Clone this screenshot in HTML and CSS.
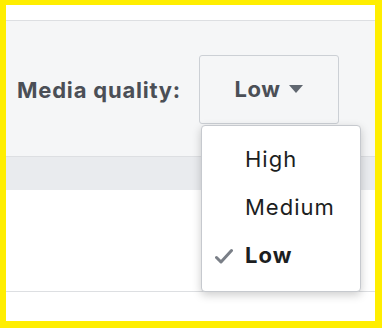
FILE: index.html
```html
<!DOCTYPE html>
<html lang="en">
<head>
  <meta charset="UTF-8" />
  <title>Media quality</title>
  <link rel="stylesheet" href="styles.css">
</head>
<body>
  <div class="frame">
    <div class="top-strip"></div>
    <div class="settings-row">
      <span class="label">Media quality:</span>
      <div class="picker">
        <button class="picker-btn">Low <span class="caret"></span></button>
        <ul class="menu">
          <li>High</li>
          <li>Medium</li>
          <li class="selected">
            <svg class="check" viewBox="0 0 18 16" width="18" height="16">
              <path d="M1.5 9.5 L6 14 L16.5 2.5" fill="none" stroke="#7a7f87" stroke-width="3" stroke-linecap="round" stroke-linejoin="round"/>
            </svg>
            Low
          </li>
        </ul>
      </div>
    </div>
    <div class="band"></div>
    <div class="content"></div>
    <div class="footer"></div>
  </div>
</body>
</html>
```

FILE: styles.css
```css
body {
  margin: 0;
  font-family: 'Inter', 'Liberation Sans', sans-serif;
  background: #ffee00;
}

.frame {
  width: 369px;
  height: 316px;
  border-style: solid;
  border-color: #ffee00;
  border-width: 5px 7px 7px 6px;
  background: #ffffff;
  display: flex;
  flex-direction: column;
  overflow: hidden;
}

.top-strip {
  height: 15px;
  background: #ffffff;
  border-bottom: 1px solid #dddfe2;
  flex-shrink: 0;
}

.settings-row {
  height: 136px;
  background: #f5f6f7;
  border-bottom: 1px solid #dddfe2;
  display: flex;
  align-items: flex-start;
  padding: 34px 0 0 11px;
  box-sizing: border-box;
  flex-shrink: 0;
}

.label {
  height: 69px;
  display: flex;
  align-items: center;
  font-size: 22px;
  font-weight: 700;
  letter-spacing: 0.8px;
  color: #4b4f56;
  width: 182px;
}

.picker {
  position: relative;
}

.picker-btn {
  width: 140px;
  height: 69px;
  border: 1px solid #ccd0d5;
  border-radius: 3px;
  background: #f5f6f7;
  font-family: inherit;
  font-size: 22px;
  font-weight: 700;
  letter-spacing: 0.5px;
  color: #4b4f56;
  display: flex;
  align-items: center;
  justify-content: center;
  gap: 9px;
  padding: 0 0 2px 0;
}

.caret {
  width: 0;
  height: 0;
  border-left: 7px solid transparent;
  border-right: 7px solid transparent;
  border-top: 8px solid #606770;
}

.menu {
  position: absolute;
  top: 70px;
  left: 2px;
  width: 160px;
  margin: 0;
  padding: 9px 0 12px 0;
  list-style: none;
  background: #ffffff;
  border: 1px solid #c6c9ce;
  border-radius: 4px;
  box-shadow: 0 3px 10px rgba(0, 0, 0, 0.2);
  box-sizing: border-box;
}

.menu li {
  position: relative;
  height: 48px;
  line-height: 48px;
  padding-left: 43px;
  font-size: 22px;
  letter-spacing: 1px;
  color: #1c1e21;
}

.menu li.selected {
  font-weight: 700;
}

.check {
  position: absolute;
  left: 13px;
  top: 17px;
}

.band {
  height: 33px;
  background: #e9ebee;
  flex-shrink: 0;
}

.content {
  height: 101px;
  background: #ffffff;
  border-bottom: 1px solid #dddfe2;
  flex-shrink: 0;
}

.footer {
  flex: 1;
  background: #ffffff;
}
```
